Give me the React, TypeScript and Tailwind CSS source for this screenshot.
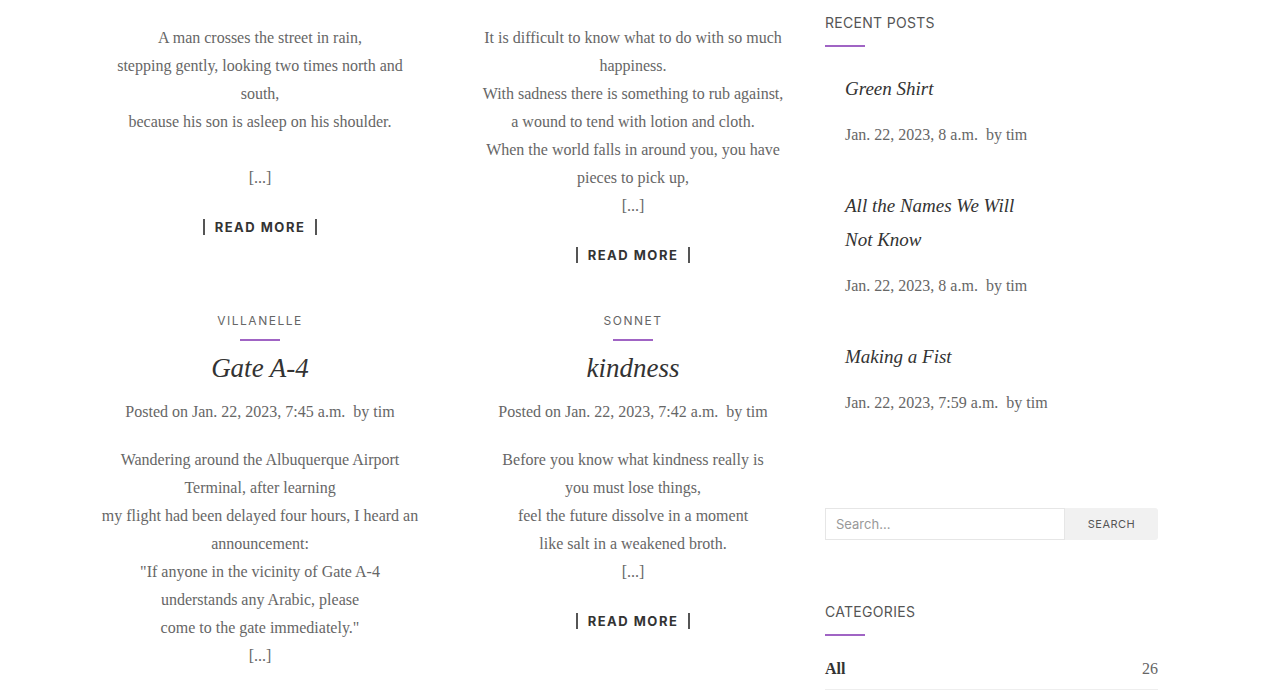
import React from 'react';

const serif = "font-['Liberation_Serif','Times_New_Roman',serif]";
const sans = "font-['Inter','Open_Sans',sans-serif]";

interface Post {
  category?: string;
  title?: string;
  posted?: string;
  lines: string[];
  gapBeforeMore?: boolean;
}

const topRow: Post[] = [
  {
    lines: [
      'A man crosses the street in rain,',
      'stepping gently, looking two times north and',
      'south,',
      'because his son is asleep on his shoulder.',
    ],
    gapBeforeMore: true,
  },
  {
    lines: [
      'It is difficult to know what to do with so much',
      'happiness.',
      'With sadness there is something to rub against,',
      'a wound to tend with lotion and cloth.',
      'When the world falls in around you, you have',
      'pieces to pick up,',
    ],
  },
];

const bottomRow: Post[] = [
  {
    category: 'Villanelle',
    title: 'Gate A-4',
    posted: 'Jan. 22, 2023, 7:45 a.m.',
    lines: [
      'Wandering around the Albuquerque Airport',
      'Terminal, after learning',
      'my flight had been delayed four hours, I heard an',
      'announcement:',
      '"If anyone in the vicinity of Gate A-4',
      'understands any Arabic, please',
      'come to the gate immediately."',
    ],
  },
  {
    category: 'Sonnet',
    title: 'kindness',
    posted: 'Jan. 22, 2023, 7:42 a.m.',
    lines: [
      'Before you know what kindness really is',
      'you must lose things,',
      'feel the future dissolve in a moment',
      'like salt in a weakened broth.',
    ],
  },
];

const recent = [
  { title: ['Green Shirt'], date: 'Jan. 22, 2023, 8 a.m.' },
  { title: ['All the Names We Will', 'Not Know'], date: 'Jan. 22, 2023, 8 a.m.' },
  { title: ['Making a Fist'], date: 'Jan. 22, 2023, 7:59 a.m.' },
];

const ReadMore: React.FC = () => (
  <div className="mt-[21px] flex h-[28px] items-center justify-center">
    <a
      href="#"
      className={`${sans} border-x-2 border-[#555] px-[10px] text-[13px] font-bold leading-[16px] tracking-[1.5px] text-[#333] uppercase`}
    >
      Read more
    </a>
  </div>
);

const PostCard: React.FC<{ post: Post }> = ({ post }) => (
  <article className="text-center">
    {post.category && (
      <>
        <div className={`${sans} text-[12px] leading-[18px] tracking-[1.5px] text-[#666] uppercase`}>
          {post.category}
        </div>
        <div className="mx-auto mt-[9px] h-[2px] w-[40px] bg-[#a064c4]" />
        <h2 className={`${serif} mt-[10px] text-[27px] italic leading-[34px] text-[#333]`}>
          {post.title}
        </h2>
        <div className={`${serif} mt-[13px] text-[16px] leading-[28px] text-[#666]`}>
          Posted on {post.posted} &nbsp;by tim
        </div>
      </>
    )}
    <div className={`${serif} ${post.category ? 'mt-[20px]' : 'pt-[1px]'} text-[16px] leading-[28px] text-[#666]`}>
      {post.lines.map((l, i) => (
        <p key={i}>{l}</p>
      ))}
      {post.gapBeforeMore && <p className="h-[28px]" />}
      <p>[...]</p>
    </div>
    <ReadMore />
  </article>
);

const WidgetTitle: React.FC<{ text: string }> = ({ text }) => (
  <div>
    <h3 className={`${sans} text-[14px] leading-[20px] tracking-[0.3px] text-[#555] uppercase`}>{text}</h3>
    <div className="mt-[12px] h-[2px] w-[40px] bg-[#a064c4]" />
  </div>
);

export default function App() {
  return (
    <div className="h-[690px] w-[1265px] overflow-hidden bg-white">
      <div className="flex pl-[100px]">
        <main className="grid w-[693px] grid-cols-2 gap-x-[53px] gap-y-[43px] pt-[23px]">
          {topRow.map((p, i) => (
            <PostCard key={i} post={p} />
          ))}
          {bottomRow.map((p, i) => (
            <PostCard key={`b${i}`} post={p} />
          ))}
        </main>

        <aside className="ml-[32px] w-[333px] pt-[13px]">
          <WidgetTitle text="Recent Posts" />
          <ul className="mt-[25px] flex flex-col gap-[40px] pl-[20px]">
            {recent.map((r, i) => (
              <li key={i}>
                <a href="#" className={`${serif} block text-[19px] italic leading-[34px] text-[#333]`}>
                  {r.title.map((t, j) => (
                    <span key={j} className="block">
                      {t}
                    </span>
                  ))}
                </a>
                <div className={`${serif} mt-[15px] text-[16px] leading-[28px] text-[#666]`}>
                  {r.date} &nbsp;by tim
                </div>
              </li>
            ))}
          </ul>

          <form className="mt-[91px] flex h-[32px]" onSubmit={(e) => e.preventDefault()}>
            <input
              placeholder="Search..."
              className={`${sans} h-full w-[240px] border border-[#e6e6e6] px-[10px] text-[13px] text-[#555] outline-none placeholder:text-[#999]`}
            />
            <button
              type="submit"
              className={`${sans} h-full flex-1 rounded-r-[3px] bg-[#f1f1f1] text-[11px] tracking-[0.5px] text-[#555] uppercase`}
            >
              Search
            </button>
          </form>

          <div className="mt-[62px]">
            <WidgetTitle text="Categories" />
            <ul className="mt-[19px]">
              <li className="flex items-center justify-between border-b border-[#eee] pb-[6px]">
                <a href="#" className={`${serif} text-[16px] font-bold leading-[28px] text-[#333]`}>
                  All
                </a>
                <span className={`${serif} text-[16px] leading-[28px] text-[#666]`}>26</span>
              </li>
            </ul>
          </div>
        </aside>
      </div>
    </div>
  );
}
